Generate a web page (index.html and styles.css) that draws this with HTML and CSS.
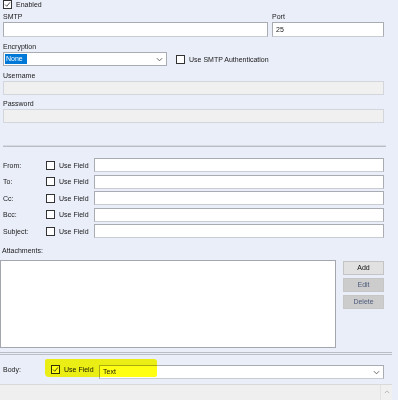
FILE: index.html
```html
<!DOCTYPE html>
<html>
<head>
  <title>Email settings</title>
  <meta name="viewport" content="width=device-width, user-scalable=no">
  <link rel="stylesheet" href="styles.css">
</head>
<body>
  <div class="server">
    <div class="check enabled">
      <span class="box on"><svg viewBox="0 0 9 9"><path d="M1.5 4.6 L3.6 6.8 L7.6 1.8" /></svg></span>
      <span>Enabled</span>
    </div>
    <div class="pair">
      <div>
        <div class="label">SMTP</div>
        <div class="input"></div>
      </div>
      <div>
        <div class="label">Port</div>
        <div class="input">25</div>
      </div>
    </div>
    <div class="label gap-enc">Encryption</div>
    <div class="enc-row">
      <div class="select">
        <span class="picked">None</span>
        <svg class="chev" viewBox="0 0 8 5"><path d="M1 1 L4 4 L7 1" /></svg>
      </div>
      <div class="check">
        <span class="box"></span>
        <span>Use SMTP Authentication</span>
      </div>
    </div>
    <div class="label gap-user">Username</div>
    <div class="input off"></div>
    <div class="label gap-pass">Password</div>
    <div class="input off"></div>
  </div>

  <div class="rule"></div>

  <div class="fields">
    <span>From:</span>
    <div class="check"><span class="box"></span><span>Use Field</span></div>
    <div class="input"></div>
    <span>To:</span>
    <div class="check"><span class="box"></span><span>Use Field</span></div>
    <div class="input"></div>
    <span>Cc:</span>
    <div class="check"><span class="box"></span><span>Use Field</span></div>
    <div class="input"></div>
    <span>Bcc:</span>
    <div class="check"><span class="box"></span><span>Use Field</span></div>
    <div class="input"></div>
    <span>Subject:</span>
    <div class="check"><span class="box"></span><span>Use Field</span></div>
    <div class="input"></div>
  </div>

  <div class="label attach-label">Attachments:</div>
  <div class="attach">
    <div class="list"></div>
    <div class="buttons">
      <div class="btn">Add</div>
      <div class="btn off">Edit</div>
      <div class="btn off">Delete</div>
    </div>
  </div>

  <div class="rule double"></div>

  <div class="body-row">
    <span>Body:</span>
    <div class="check"><span class="box on"><svg viewBox="0 0 9 9"><path d="M1.5 4.6 L3.6 6.8 L7.6 1.8" /></svg></span><span>Use Field</span></div>
    <div class="input combo">
      <span>Text</span>
      <svg class="chev" viewBox="0 0 8 5"><path d="M1 1 L4 4 L7 1" /></svg>
    </div>
    <div class="marker"></div>
  </div>

  <div class="body-text">
    <div class="scroll">
      <svg viewBox="0 0 8 5"><path d="M1 4 L4 1 L7 4" /></svg>
    </div>
  </div>
</body>
</html>
```

FILE: styles.css
```css
html, body {
  margin: 0;
  height: 400px;
  overflow: hidden;
}
body {
  background-color: #eaeef9;
  font-family: "Liberation Sans", Arial, sans-serif;
  font-size: 7px;
  color: #1a1a1a;
}
.server {
  padding: 0 14px 0 3px;
}
.label {
  height: 11px;
  line-height: 11px;
}
.check {
  display: flex;
  align-items: center;
  gap: 4px;
  white-space: nowrap;
}
.box {
  box-sizing: border-box;
  width: 9px;
  height: 9px;
  border: 1px solid #333;
  background: #fff;
  flex: none;
  display: block;
}
.box svg {
  display: block;
  width: 7px;
  height: 7px;
}
.box path {
  fill: none;
  stroke: #222;
  stroke-width: 1;
}
.enabled {
  margin-top: -2px;
  height: 13px;
}
.enabled .box {
  margin-top: -1px;
}
.input {
  box-sizing: border-box;
  height: 14px;
  line-height: 12px;
  padding: 0 3px;
  background: #fff;
  border: 1px solid #a9acb2;
  border-bottom-color: #c9ccd2;
}
.input.off {
  background: #f0f0f0;
  border-color: #d3d6dc;
}
.pair {
  display: grid;
  grid-template-columns: 265px 1fr;
  gap: 4px;
}
.pair .input {
  height: 15px;
  line-height: 13px;
}
.gap-enc {
  margin-top: 4px;
}
.enc-row {
  display: flex;
  align-items: center;
  gap: 9px;
}
.select {
  box-sizing: border-box;
  width: 164px;
  height: 14px;
  background: #fff;
  border: 1px solid #a9acb2;
  display: flex;
  align-items: center;
  justify-content: space-between;
  padding: 0 3px 0 1px;
}
.picked {
  background: #0078d7;
  color: #fff;
  line-height: 10px;
  padding: 0 4px 0 1px;
}
.chev {
  width: 7px;
  height: 5px;
}
.chev path {
  fill: none;
  stroke: #555;
  stroke-width: 1;
}
.gap-user {
  margin-top: 4px;
}
.gap-pass {
  margin-top: 3px;
}
.rule {
  margin: 22px 12px 0 3px;
  height: 0;
  border-top: 1px solid #d6dae2;
  border-bottom: 1px solid #b9bdc5;
}
.fields {
  display: grid;
  grid-template-columns: 43px 48px 1fr;
  row-gap: 2.6px;
  align-items: center;
  padding: 0 14px 0 3px;
  margin-top: 11px;
}
.fields .input {
  height: 14px;
}
.attach-label {
  margin: 6px 0 0 2px;
  height: 14px;
  line-height: 14px;
}
.attach {
  display: flex;
  gap: 7px;
  padding-right: 14px;
  margin-top: 2px;
}
.list {
  box-sizing: border-box;
  width: 336px;
  height: 88px;
  background: #fff;
  border: 1px solid #a3a7ae;
}
.buttons {
  flex: 1;
  display: flex;
  flex-direction: column;
  gap: 3px;
  padding-top: 1px;
}
.btn {
  box-sizing: border-box;
  height: 14px;
  line-height: 12px;
  text-align: center;
  background: #e1e1e1;
  border: 1px solid #c4c4c4;
  color: #111;
}
.btn.off {
  background: #cccccc;
  border-color: #c6c6c6;
  color: #4d5a7a;
}
.rule.double {
  margin: 4px 6px 0 0;
  height: 1px;
  border-top: 1px solid #b9bdc5;
  border-bottom: 1px solid #b9bdc5;
}
.body-row {
  position: relative;
  display: grid;
  grid-template-columns: 45px 51px 1fr;
  align-items: center;
  padding: 0 14px 0 3px;
  height: 20px;
  margin-top: 4px;
}
.body-row .check {
  padding-left: 3px;
  padding-top: 1px;
}
.combo {
  display: flex;
  justify-content: space-between;
  align-items: center;
  margin-top: 6px;
}
.marker {
  position: absolute;
  left: 45px;
  top: 0;
  width: 112px;
  height: 18px;
  background: #ffff14;
  mix-blend-mode: multiply;
  border-radius: 2px 3px 2px 4px;
}
.body-text {
  box-sizing: border-box;
  margin: 5px 6px 0 0;
  height: 30px;
  background: #efefef;
  border-top: 1px solid #d9d9d9;
  display: flex;
  justify-content: flex-end;
}
.scroll {
  width: 11px;
  background: #f0f0f0;
  border-left: 1px solid #e2e2e2;
  display: flex;
  justify-content: center;
  padding-top: 5px;
}
.scroll svg {
  width: 6px;
  height: 4px;
}
.scroll path {
  fill: none;
  stroke: #a8a8a8;
  stroke-width: 1;
}
```
